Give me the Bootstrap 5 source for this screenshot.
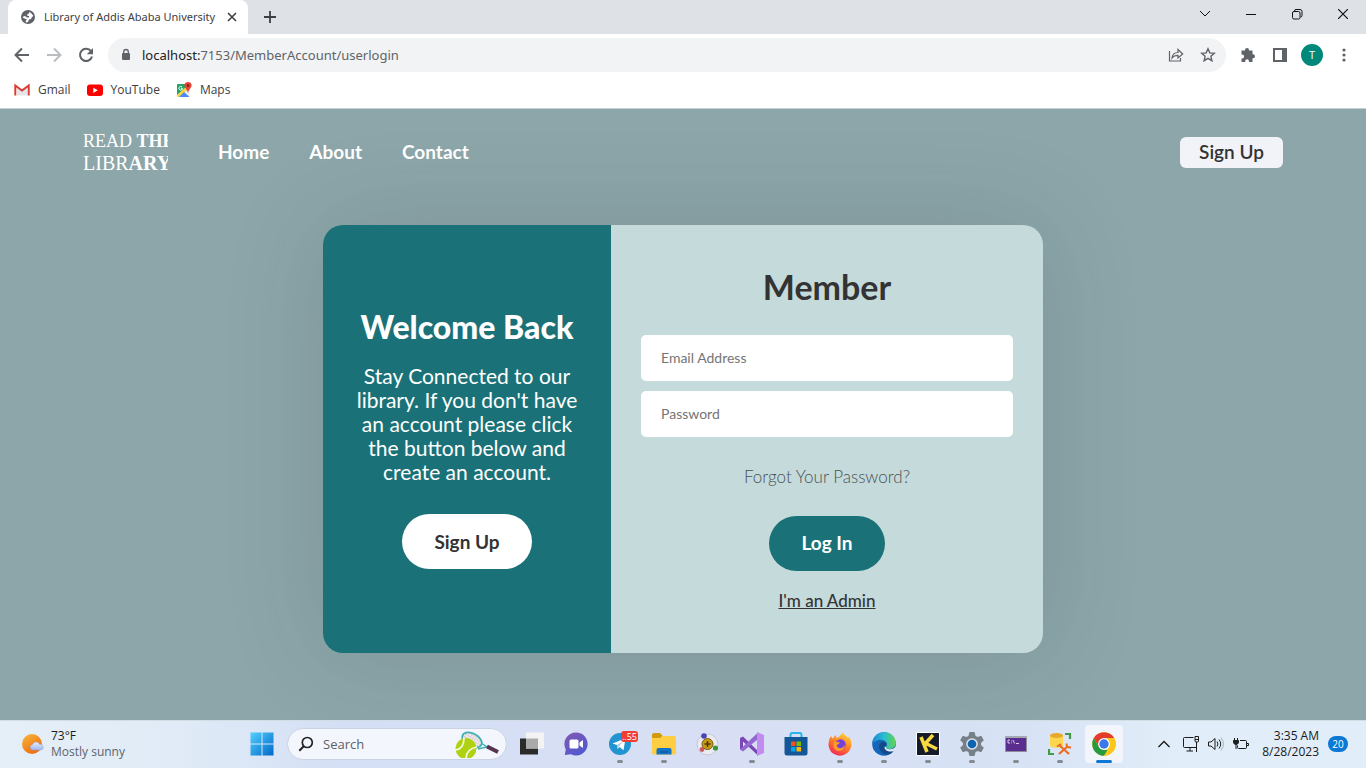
<!DOCTYPE html>
<html lang="en">
<head>
<meta charset="utf-8">
<meta name="viewport" content="width=device-width, initial-scale=1">
<title>Library of Addis Ababa University</title>
<link href="https://cdn.jsdelivr.net/npm/bootstrap@5.3.0/dist/css/bootstrap.min.css" rel="stylesheet">
<style>
  :root { --teal: #1a7278; --mist: #c5dadb; --sage: #8ca6a9; --ink: #333333; --chrome-ink: #5f6368; }
  body { font-family: "Open Sans", sans-serif; font-size: 12px; line-height: 16px; background: var(--sage); }
  svg { display: block; flex: none; }
  .plain { border: 0; background: none; padding: 0; color: inherit; display: flex; align-items: center; justify-content: center; }

  /* Browser frame */
  .tab-strip { height: 34px; background: #dee1e6; color: #3c4043; padding-left: 8px; }
  .tab-active { width: 240px; background: #fff; border-radius: 8px 8px 0 0; padding: 0 11px 0 12px; gap: 8px; font-family: "Noto Sans", sans-serif; font-size: 11px; }
  .win-controls { color: #111; }
  .win-controls .plain { width: 46px; height: 28px; }
  .toolbar { height: 38px; background: #fff; padding: 4px 6px 0 14px; color: var(--chrome-ink); }
  .address { height: 34px; border-radius: 17px; background: #f1f3f4; padding: 0 10px 0 12px; margin: 0 6px 0 14px; }
  .address input, .url-host { font-family: "Noto Sans", sans-serif; font-size: 13px; }
  .address input { border: 0; background: none; outline: 0; padding: 0; color: var(--chrome-ink); }
  .url-host { color: #202124; margin-left: 10px; }
  .tool-btn { width: 32px; }
  .avatar { width: 22px; height: 22px; border-radius: 50%; background: #00897b; color: #fff; font-size: 11px; }
  .bookmarks { height: 37px; background: #fff; padding-left: 14px; gap: 16px; border-bottom: 1px solid #c6d0d2; }
  .bookmarks a { color: #3c4043; text-decoration: none; gap: 8px; }

  /* Library site */
  .site { font-family: Lato, sans-serif; color: var(--ink); }
  .site-nav, .site-login { width: 100%; margin: 0 auto; }
  .site-nav { max-width: 1200px; height: 86px; }
  .site-logo { width: 85px; overflow: hidden; white-space: nowrap; font: 18px/22px "Liberation Serif", serif; color: #fff; text-decoration: none; }
  .logo-wide { font-size: 20px; }
  .site-links { gap: 40px; margin-left: 50px; }
  .site-links a { color: #fff; font-size: 19px; font-weight: 700; line-height: 24px; text-decoration: none; }
  .nav-signup { width: 103px; height: 31px; border: 0; border-radius: 6px; background: #f1f3f9; color: var(--ink); font-size: 19px; font-weight: 600; }
  .site-login { max-width: 720px; min-height: 428px; margin-top: 30px; margin-bottom: 67px; border-radius: 20px; overflow: hidden; box-shadow: 0 0 100px rgba(50, 50, 50, .15); }
  .welcome { flex: 0 0 40%; background: var(--teal); color: #fff; padding: 0 30px; }
  .welcome h2 { font-size: 32px; line-height: 36px; font-weight: 900; margin: 0 0 19px; white-space: nowrap; }
  .welcome p { font-size: 21px; line-height: 24px; margin: 0 0 30px; }
  .pill { height: 55px; border: 0; border-radius: 28px; font-size: 19px; font-weight: 700; padding: 0 32px; }
  .pill-light { background: #fff; color: var(--ink); }
  .pill-teal { background: var(--teal); color: #fff; }
  .member { background: var(--mist); padding: 2px 30px 0; }
  .member h1 { font-size: 34px; line-height: 38px; font-weight: 700; margin: 0 0 29px; }
  .member .form-control { height: 46px; border: 0; border-radius: 5px; padding: 0 20px; font-size: 14px; margin-bottom: 10px; }
  .member .form-control::placeholder { color: #757575; opacity: 1; }
  .forgot { color: #4a5254; font-size: 17px; line-height: 24px; font-weight: 300; text-decoration: none; margin: 18px 0 27px; }
  .admin-link { color: var(--ink); font-size: 17px; line-height: 24px; margin-top: 18px; font-weight: 500; }

  /* Taskbar */
  .taskbar { height: 48px; display: grid; grid-template-columns: 1fr auto 1fr; background: linear-gradient(90deg, #e4eff8 0%, #e0ebf7 13%, #d4dff5 25%, #d8dff4 52%, #d7e2f5 75%, #e1edf8 86%, #e1edf8 100%); box-shadow: inset 0 1px #d1dfe5; color: #1b1b1b; }
  .weather { padding-left: 20px; gap: 7px; }
  .weather-note { color: #5c636b; }
  .apps { gap: 6px; }
  .app-btn { width: 38px; height: 38px; position: relative; border-radius: 4px; }
  .app-open::after { content: ""; position: absolute; bottom: 0; left: 16px; width: 6px; height: 3px; border-radius: 2px; background: #858a93; }
  .app-current { background: #f2f6fc; }
  .app-current::after { left: 11px; width: 16px; background: #0a78d4; }
  .search { width: 220px; height: 32px; border-radius: 16px; background: #f3f7fd; border: 1px solid #c9d3e5; padding: 0 6px 0 10px; gap: 9px; overflow: hidden; }
  .search input { border: 0; background: none; outline: 0; min-width: 0; flex: 1; padding: 0; font-size: 13px; }
  .search input::placeholder { color: #5c6066; }
  .count-badge { position: absolute; top: 6px; right: 1px; padding: 0 1px; border-radius: 3px; background: #f23c34; color: #fff; font-size: 9px; line-height: 11px; }
  .tray { padding-right: 18px; gap: 9px; }
  .clock { text-align: right; }
  .notice { width: 20px; height: 16px; border-radius: 8px; background: #0a78d4; color: #fff; font-size: 10px; }
</style>
</head>
<body class="d-flex flex-column min-vh-100">

<header>
  <div class="tab-strip d-flex">
    <div class="tab-active d-flex align-items-center">
      <svg width="16" height="16" viewBox="0 0 16 16"><circle cx="8" cy="8" r="7" fill="#5f6368"/><path d="M2.500 8.500Q3 7 5 7l2 1.500h2V7H7.500l-.3-1.800L9 4.500V3l2 1 2.500 3-1.500 1-1 2-2 .5L8 13l-2 .5-.5-1.500L7 10.500 4.500 9.500z" fill="#fff"/></svg>
      <span class="flex-grow-1 text-nowrap">Library of Addis Ababa University</span>
      <button class="plain" type="button" aria-label="Close tab"><svg width="10" height="10" viewBox="0 0 10 10" stroke="#3c4043" stroke-width="1.600"><path d="m1 1 8 8M9 1 1 9"/></svg></button>
    </div>
    <button class="plain ms-3" type="button" aria-label="New tab"><svg width="12" height="12" viewBox="0 0 12 12" stroke="#3c4043" stroke-width="1.800"><path d="M6 0v12M0 6h12"/></svg></button>
    <div class="win-controls d-flex ms-auto">
      <button class="plain" type="button" aria-label="Search tabs"><svg width="12" height="8" viewBox="0 0 12 8" fill="none" stroke="currentColor"><path d="m1 1 5 5 5-5"/></svg></button>
      <button class="plain" type="button" aria-label="Minimize"><svg width="10" height="10" viewBox="0 0 10 10" stroke="currentColor"><path d="M0 5.500h10"/></svg></button>
      <button class="plain" type="button" aria-label="Restore"><svg width="12" height="12" viewBox="0 0 12 12" fill="none" stroke="currentColor"><rect x="1.500" y="3.500" width="7.500" height="7.500" rx="1.500"/><path d="M3.500 3.500v-.5a1.500 1.500 0 0 1 1.500-1.500h4a2 2 0 0 1 2 2v4a1.500 1.500 0 0 1-1.500 1.500"/></svg></button>
      <button class="plain" type="button" aria-label="Close"><svg width="10" height="10" viewBox="0 0 10 10" stroke="currentColor" stroke-width="1.200"><path d="m0 0 10 10M10 0 0 10"/></svg></button>
    </div>
  </div>

  <div class="toolbar d-flex align-items-center">
    <div class="d-flex align-items-center gap-3">
      <button class="plain" type="button" aria-label="Back"><svg width="16" height="16" viewBox="0 0 16 16" fill="none" stroke="currentColor" stroke-width="2"><path d="M15 8H2M8 1.500 1.500 8 8 14.500"/></svg></button>
      <button class="plain" type="button" aria-label="Forward"><svg width="16" height="16" viewBox="0 0 16 16" fill="none" stroke="#bbbec1" stroke-width="2"><path d="M1 8h13M8 1.500 14.500 8 8 14.500"/></svg></button>
      <button class="plain" type="button" aria-label="Reload"><svg width="16" height="16" viewBox="0 0 16 16"><path d="M13 4.200A6.100 6.100 0 1 0 14 9.500" fill="none" stroke="currentColor" stroke-width="2"/><path d="M15 1v6.200H8.800z" fill="currentColor"/></svg></button>
    </div>
    <div class="address d-flex align-items-center flex-grow-1">
      <svg width="12" height="14" viewBox="0 0 12 14"><rect x="2" y="5" width="8" height="7" rx="1" fill="#5f6368"/><path d="M3.700 5.500V3.800a2.300 2.300 0 0 1 4.600 0v1.700" fill="none" stroke="#5f6368" stroke-width="1.300"/></svg>
      <label for="url" class="url-host">localhost:</label>
      <input id="url" class="flex-grow-1" type="text" value="7153/MemberAccount/userlogin">
      <button class="plain" type="button" aria-label="Share"><svg width="16" height="16" viewBox="0 0 16 16" fill="none" stroke="currentColor" stroke-width="1.200"><path d="M1.500 4v10h11v-3M4 11c.5-4 2.500-5.500 6-5.500V2.500L14.700 7 10 11V8.300c-3 0-4.500.7-6 2.700z"/></svg></button>
      <button class="plain ms-3" type="button" aria-label="Bookmark"><svg width="16" height="16" viewBox="0 0 16 16" fill="none" stroke="currentColor" stroke-width="1.400"><path d="m8 1.800 1.800 4.100 4.500.4-3.400 3 1 4.400L8 11.400l-3.900 2.300 1-4.400-3.400-3 4.500-.4z"/></svg></button>
    </div>
    <div class="d-flex align-items-center">
      <button class="plain tool-btn" type="button" aria-label="Extensions"><svg width="16" height="16" viewBox="0 0 16 16" fill="currentColor"><path d="M5 3.500V3a2 2 0 0 1 4 0v.5h3.500v3.700h.5a2 2 0 0 1 0 4h-.5V15H9v-.8a1.900 1.900 0 0 0-3.800 0v.8H1.500v-3.600h.7a1.900 1.900 0 0 0 0-3.800h-.7V3.500z"/></svg></button>
      <button class="plain tool-btn" type="button" aria-label="Side panel"><svg width="16" height="16" viewBox="0 0 16 16"><path fill-rule="evenodd" d="M1 1h14v14H1zm2 2v10h7V3z" fill="currentColor"/></svg></button>
      <button class="plain tool-btn" type="button"><span class="avatar d-flex align-items-center justify-content-center">T</span></button>
      <button class="plain tool-btn" type="button" aria-label="Menu"><svg width="16" height="16" viewBox="0 0 16 16" fill="currentColor"><circle cx="8" cy="3" r="1.600"/><circle cx="8" cy="8" r="1.600"/><circle cx="8" cy="13" r="1.600"/></svg></button>
    </div>
  </div>

  <nav class="bookmarks d-flex align-items-center" aria-label="Bookmarks">
    <a class="d-flex align-items-center" href="#"><svg width="16" height="16" viewBox="0 0 16 16"><path d="M3 4v9.500h10V4L8 8z" fill="#e3e5e8"/><path d="M1.300 13.500V3.500L8 8.500l6.700-5v10" fill="none" stroke="#d93d31" stroke-width="2"/></svg>Gmail</a>
    <a class="d-flex align-items-center" href="#"><svg width="16" height="16" viewBox="0 0 16 16"><rect y="2.500" width="16" height="11.500" rx="3" fill="#f00"/><path d="m6.300 5.700 4.600 2.600-4.600 2.600z" fill="#fff"/></svg>YouTube</a>
    <a class="d-flex align-items-center" href="#"><svg width="16" height="16" viewBox="0 0 16 16"><rect x="1" y="2" width="12.500" height="13" rx="1" fill="#e8eaed"/><path d="M1 13V3q0-1 1-1h8v4z" fill="#1fa463"/><path d="m1 13 9.500-8.500 2 2L4 15H2q-1 0-1-1z" fill="#fdd344"/><path d="m3 15 5-5 5.500 5z" fill="#4a8af4"/><path d="M12 0a3.600 3.600 0 0 1 3.600 3.600C15.600 6 13 7 12 11c-1-4-3.600-5-3.600-7.400A3.600 3.600 0 0 1 12 0z" fill="#ea4335"/><circle cx="12" cy="3.600" r="1.300" fill="#7b231e"/><path d="M6 5a1.800 1.800 0 1 0 .5 1.300H5" fill="none" stroke="#fff"/></svg>Maps</a>
  </nav>
</header>

<main class="site flex-grow-1 d-flex flex-column">
  <nav class="site-nav d-flex align-items-center">
    <a class="site-logo" href="#">READ <b>THE</b><br><span class="logo-wide">LIBR<b>ARY</b></span></a>
    <div class="site-links d-flex">
      <a href="#">Home</a><a href="#">About</a><a href="#">Contact</a>
    </div>
    <button class="nav-signup plain ms-auto" type="button">Sign Up</button>
  </nav>

  <section class="site-login d-flex">
    <div class="welcome d-flex flex-column align-items-center justify-content-center text-center">
      <h2>Welcome Back</h2>
      <p>Stay Connected to our library. If you don't have an account please click the button below and create an account.</p>
      <button class="pill pill-light" type="button">Sign Up</button>
    </div>
    <form class="member flex-grow-1 d-flex flex-column align-items-center justify-content-center">
      <h1>Member</h1>
      <input class="form-control" type="email" placeholder="Email Address" aria-label="Email Address">
      <input class="form-control" type="password" placeholder="Password" aria-label="Password">
      <a class="forgot" href="#">Forgot Your Password?</a>
      <button class="pill pill-teal" type="button">Log In</button>
      <a class="admin-link" href="#">I'm an Admin</a>
    </form>
  </section>
</main>

<footer class="taskbar">
  <div class="weather d-flex align-items-center">
    <svg width="24" height="24" viewBox="0 0 24 24"><defs><linearGradient id="sun" x2=".6" y2="1"><stop stop-color="#f6b93a"/><stop offset="1" stop-color="#f06c12"/></linearGradient><linearGradient id="cloud" y2="1" x2="0"><stop stop-color="#e8effd"/><stop offset="1" stop-color="#9fb5ea"/></linearGradient></defs><circle cx="12" cy="12" r="10" fill="url(#sun)"/><path d="M12.500 18a2.800 2.800 0 0 1 0-5.500 3.800 3.800 0 0 1 7-.2 2.900 2.900 0 0 1 1.500 5.700z" fill="url(#cloud)" stroke="#8da5e0" stroke-width=".5"/></svg>
    <div><div>73°F</div><div class="weather-note">Mostly sunny</div></div>
  </div>

  <div class="apps d-flex align-items-center">
    <button class="plain app-btn" type="button" aria-label="Start"><svg width="24" height="24" viewBox="0 0 24 24"><defs><linearGradient id="win" x2="1" y2="1"><stop stop-color="#52d0ff"/><stop offset="1" stop-color="#0067c8"/></linearGradient></defs><path d="M.5.500h11v11H.5zm12 0h11v11h-11zm-12 12h11v11H.5zm12 0h11v11h-11z" fill="url(#win)"/></svg></button>
    <div class="search d-flex align-items-center">
      <svg width="16" height="16" viewBox="0 0 16 16" fill="none" stroke="#222" stroke-width="1.700"><circle cx="9.300" cy="6.500" r="5"/><path d="M5.700 10.200 1.300 14.700" stroke-width="2"/></svg>
      <input type="search" placeholder="Search" aria-label="Search">
      <svg width="46" height="28" viewBox="0 0 46 28"><defs><pattern id="net" width="2.500" height="2.500" patternUnits="userSpaceOnUse"><path d="M0 0h2.500M0 0v2.500" stroke="#c2b2b8" stroke-width=".9"/></pattern></defs><ellipse cx="18" cy="10" rx="10.500" ry="6.500" transform="rotate(28 18 10)" fill="#f6f2f4"/><ellipse cx="18" cy="10" rx="10.500" ry="6.500" transform="rotate(28 18 10)" fill="url(#net)" stroke="#3fb1b5" stroke-width="1.800"/><path d="m27 13 6 4-9 2" fill="none" stroke="#3fb1b5" stroke-width="1.500"/><path d="m33 16.500 11 5.500" stroke="#56324f" stroke-width="4"/><circle cx="12" cy="18.500" r="10.500" fill="#b0d012"/><path d="M1.500 20Q10 19 10 8M12 29q0-10 11-12" fill="none" stroke="#f4fbe0" stroke-width="1.700"/></svg>
    </div>
    <button class="plain app-btn" type="button" aria-label="Task view"><svg width="24" height="24" viewBox="0 0 24 24"><rect y="6.500" width="18" height="16" fill="#2b2b2b"/><rect x="6" y=".5" width="18" height="16" fill="#f3f3f3"/><path d="M6 6.500h12v10H6z" fill="#aaa"/></svg></button>
    <button class="plain app-btn" type="button" aria-label="Chat"><svg width="24" height="24" viewBox="0 0 24 24"><defs><linearGradient id="chat" x2=".6" y2="1"><stop stop-color="#8558b0"/><stop offset="1" stop-color="#5059d0"/></linearGradient></defs><path d="M12 .5a11.500 11.500 0 1 1-5 21.800L.8 23l1-5.500A11.500 11.500 0 0 1 12 .5z" fill="url(#chat)"/><rect x="5.500" y="7.500" width="9" height="9" rx="1.500" fill="#fff"/><path d="m15.500 10.500 3.500-2.500v8l-3.500-2.500z" fill="#fff"/></svg></button>
    <button class="plain app-btn app-open" type="button" aria-label="Telegram"><svg width="24" height="24" viewBox="0 0 24 24"><circle cx="12" cy="12" r="11" fill="#2294cf"/><path d="m4.500 11.500 13-5.300-2 12-4-3.200-2 2-.5-4z" fill="#fff"/><path d="m9 13 6-4-4 5.500-1.800 2z" fill="#a8cde4"/></svg><span class="count-badge">..55</span></button>
    <button class="plain app-btn app-open" type="button" aria-label="File Explorer"><svg width="24" height="24" viewBox="0 0 24 24"><path d="M0 3q0-2 2-2h6l2.500 2.500L8 8H0z" fill="#d39a0c"/><path d="M0 6h8l2.500-2H22q2 0 2 2v15q0 1.500-1.500 1.500h-21Q0 22.500 0 21z" fill="#fdce44"/><path d="M4.500 22.500V18q0-2 2-2h11q2 0 2 2v4.500z" fill="#1272c4"/><path d="M8 19.500h8v1H8z" fill="#0b4f92"/></svg></button>
    <button class="plain app-btn" type="button" aria-label="Molecule"><svg width="24" height="24" viewBox="0 0 24 24"><circle cx="11.500" cy="12.500" r="10.500" fill="#e9eaf2" stroke="#c6c8d5"/><circle cx="11.500" cy="12" r="5.500" fill="#c79a16" stroke="#7a6010"/><path d="M11.500 9v6m-3-3h6" stroke="#4a3804" stroke-width="1.500"/><circle cx="8" cy="4" r="2.800" fill="#4744b4"/><circle cx="6" cy="17.500" r="2.400" fill="#c95b5b"/><circle cx="19.500" cy="16" r="2.600" fill="#3a9639"/></svg></button>
    <button class="plain app-btn app-open" type="button" aria-label="Visual Studio"><svg width="24" height="24" viewBox="0 0 24 24"><path d="m0 6 3-1.500L18 19v4.500L3 9.500V16l-3 1.500z" fill="#7a47b5"/><path d="M0 17.500 18 .5V7L3 19.500z" fill="#9467d1"/><path d="m17 0 7 3v18l-7 3z" fill="#c28bf2"/></svg></button>
    <button class="plain app-btn" type="button" aria-label="Microsoft Store"><svg width="24" height="24" viewBox="0 0 24 24"><path d="M6.500 6V3q0-2 2-2h7q2 0 2 2v3" fill="none" stroke="#28b5ec" stroke-width="2"/><path d="M.5 5h23v16q0 2.500-2.500 2.500H3Q.5 23.500.5 21z" fill="#145796"/><path d="M7 9.500h4.500V14H7z" fill="#f25022"/><path d="M12.500 9.500H17V14h-4.500z" fill="#7fba00"/><path d="M7 15h4.500v4.500H7z" fill="#00a4ef"/><path d="M12.500 15H17v4.500h-4.500z" fill="#ffb900"/></svg></button>
    <button class="plain app-btn app-open" type="button" aria-label="Firefox"><svg width="24" height="24" viewBox="0 0 24 24"><defs><linearGradient id="fox" x1=".8" x2=".3" y2="1"><stop stop-color="#ffd93b"/><stop offset=".5" stop-color="#ff8024"/><stop offset="1" stop-color="#f0265c"/></linearGradient></defs><path d="M15 .5c1 2.500 4 3.500 5 5.500l1-1.500c2 3 2.500 5.500 2.300 8A11.400 11.400 0 1 1 1 9c.3-2 1-3.500 2-5l1.500 2.500C6 5.500 6 4 8 3l.5 2.800C12 5.500 12.500 2.500 15 .5z" fill="url(#fox)"/><circle cx="12.500" cy="12.500" r="5.200" fill="#7441d8"/><path d="M6 10c2-1 4 .5 6 .2-1 2-3 2-3.200 3.300.5 3.500 6 4 8-1-.2 5-3.800 7-7 6.500C6 18 4.500 14 6 10z" fill="#ff9a2c"/></svg></button>
    <button class="plain app-btn app-open" type="button" aria-label="Edge"><svg width="24" height="24" viewBox="0 0 24 24"><defs><linearGradient id="edge" x2="1"><stop stop-color="#1d87d8"/><stop offset=".5" stop-color="#29bdd2"/><stop offset="1" stop-color="#63d54c"/></linearGradient></defs><circle cx="12" cy="12" r="11.800" fill="#1565b8"/><path d="M.3 11C1 4 6.500.2 12 .2c7 0 11.800 5 11.800 10.300 0 4-3 6.500-6.300 6.500-2.500 0-4-1-3.500-2.200C17 10 11 6.500 6.500 8 3 9 1 11 .3 11z" fill="url(#edge)"/><path d="M14 14.800C17 9.500 9 7.500 7.200 13c-1 5 3.500 10.500 10 9.300 2.500-1 4.500-3 5.300-4.800-4 2.500-9.500.5-8.500-2.700z" fill="#134a8c"/><path d="M14 14.500c-.8 2 2.500 3.200 6 2.500 1.500-.3 3-1.500 3.800-2.800v2.300l-2 2.500c-5 1.500-9.500-.5-9.300-4z" fill="#e1e8f6"/></svg></button>
    <button class="plain app-btn app-open" type="button" aria-label="KMPlayer"><svg width="24" height="24" viewBox="0 0 24 24"><path d="M.5.500h23v23H.5z" fill="#161b2b" stroke="#fff"/><path d="m5 5 6 15M17 3 8 13m1-2 12 6" stroke="#f6d83f" stroke-width="3.500"/></svg></button>
    <button class="plain app-btn app-open" type="button" aria-label="Settings"><svg width="24" height="24" viewBox="0 0 24 24"><path d="M9.500 0h5l1 3.800 2 1.200 3.800-1.200 2.500 4.400-2.800 2.700v2.200l2.800 2.700-2.500 4.400-3.800-1.200-2 1.200-1 3.800h-5l-1-3.800-2-1.200-3.800 1.200-2.500-4.400L3 13.100v-2.200L.2 8.200l2.500-4.400L6.500 5l2-1.200z" fill="#777f88"/><circle cx="12" cy="12" r="5.800" fill="#dce4ef"/><circle cx="12" cy="12" r="4.300" fill="#1062b3"/></svg></button>
    <button class="plain app-btn app-open" type="button" aria-label="Command Prompt"><svg width="24" height="24" viewBox="0 0 24 24"><path d="M1.500 4.500h21v15h-21z" fill="#5b2d91" stroke="#8b8f98"/><path d="M1 4h22v2H1z" fill="#a5a9b2"/><path d="M6 8H4v3h2M7.500 8.500v.8m0 1.200v.8M9 8l1.500 3.500M12 11.500h3" fill="none" stroke="#e5d9f3" stroke-width=".9"/></svg></button>
    <button class="plain app-btn app-open" type="button" aria-label="SQL Server Management Studio"><svg width="24" height="24" viewBox="0 0 24 24"><path d="M2 3.500v10c0 3 13 3 13 0v-10z" fill="#fbd64e"/><ellipse cx="8.500" cy="3.500" rx="6.500" ry="2.500" fill="#e6a92b"/><path d="M17 2h5v5M6 22H1v-5" fill="none" stroke="#3f9b48" stroke-width="2.200"/><path d="m11 13 10 9M20 14l-9 8" stroke="#ee6c20" stroke-width="2.200"/><path d="m9 14.500 4-2.500M18.500 11.500l.5 3.500 4 .5" fill="none" stroke="#ee6c20" stroke-width="2"/></svg></button>
    <button class="plain app-btn app-open app-current" type="button" aria-label="Chrome"><svg width="24" height="24" viewBox="0 0 24 24"><circle cx="12" cy="12" r="11.800" fill="#fcc61b"/><path d="M1.800 6.100a11.800 11.800 0 0 1 20.400 0H12L7 14.800z" fill="#e33b2e"/><path d="M1.800 6.100 6.900 15 12 17.900h5L12 23.800A11.800 11.800 0 0 1 1.800 6.100z" fill="#249a41"/><path d="M17.100 15 12 23.800A11.800 11.800 0 0 0 22.200 6.100H12z" fill="#fcc61b"/><circle cx="12" cy="12" r="5.900" fill="#fff"/><circle cx="12" cy="12" r="4.700" fill="#3a79ea"/></svg></button>
  </div>

  <div class="tray d-flex align-items-center justify-content-end">
    <button class="plain me-1" type="button" aria-label="Hidden icons"><svg width="12" height="8" viewBox="0 0 12 8" fill="none" stroke="currentColor" stroke-width="1.300"><path d="m.5 7 5.500-5.500L11.500 7"/></svg></button>
    <svg width="16" height="16" viewBox="0 0 16 16" fill="none" stroke="currentColor"><path d="M10.500 1.500h-9q-1 0-1 1v8q0 1 1 1h12v-4M7 11.500V15M3.500 15H10M12 .5h3.500V5q0 1-1 1H13q-1 0-1-1zM13.500 6v10M12 3.500h3.500"/></svg>
    <svg width="16" height="16" viewBox="0 0 16 16" fill="none" stroke="currentColor"><path d="M.5 6v4H3l4 3.500v-11L3 6zM9 5.500q2 2.500 0 5M11 3.500q3.500 4.500 0 9"/><path d="M13 1.500q5 6.500 0 13" stroke="#a9b0b8"/></svg>
    <svg width="16" height="16" viewBox="0 0 16 16" fill="none" stroke="currentColor"><path d="M7 4.500h5.500q1 0 1 1v6q0 1-1 1h-7q-1 0-1-1v-2M13.500 7.500h2v2h-2"/><path d="M1.500 2v2.500M4.500 2v2.500M3 8v5"/><path d="M.5 4.500h5v2Q5 8.500 3 8.500T.5 6.500z" fill="currentColor"/></svg>
    <div class="clock text-nowrap ms-1"><div>3:35 AM</div><div>8/28/2023</div></div>
    <button class="plain notice" type="button">20</button>
  </div>
</footer>

<script src="https://cdn.jsdelivr.net/npm/bootstrap@5.3.0/dist/js/bootstrap.bundle.min.js"></script>
</body>
</html>
